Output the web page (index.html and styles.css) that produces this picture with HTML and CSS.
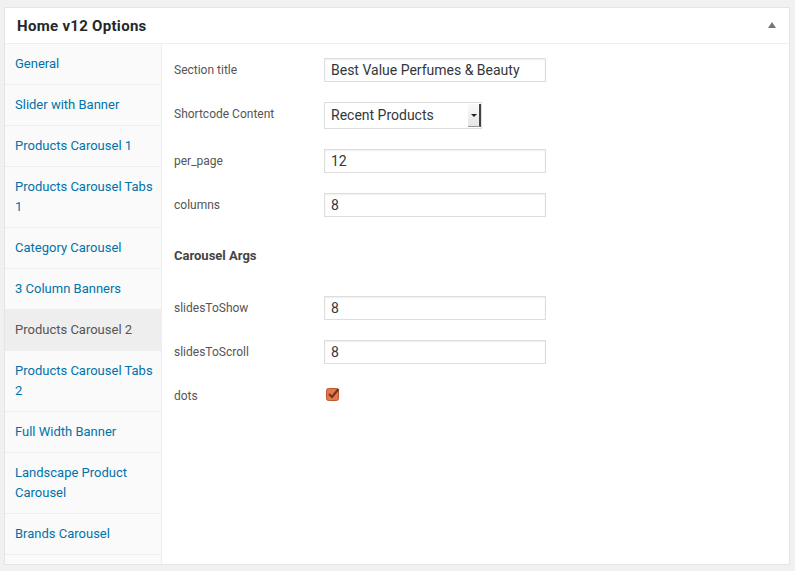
FILE: index.html
```html
<!DOCTYPE html>
<html>
<head>
<meta charset="utf-8">
<link rel="stylesheet" href="styles.css">
</head>
<body>
<div class="postbox">
  <div class="hndle">
    <h2 class="title">Home v12 Options</h2>
    <span class="toggle"></span>
  </div>
  <div class="inside">
    <ul class="tabs">
      <li><a>General</a></li>
      <li><a>Slider with Banner</a></li>
      <li><a>Products Carousel 1</a></li>
      <li><a>Products Carousel Tabs 1</a></li>
      <li><a>Category Carousel</a></li>
      <li><a>3 Column Banners</a></li>
      <li class="active"><a>Products Carousel 2</a></li>
      <li><a>Products Carousel Tabs 2</a></li>
      <li><a>Full Width Banner</a></li>
      <li><a>Landscape Product Carousel</a></li>
      <li><a>Brands Carousel</a></li>
    </ul>
    <div class="panel">
      <div class="row">
        <label class="label">Section title</label>
        <div class="input">Best Value Perfumes &amp; Beauty</div>
      </div>
      <div class="row">
        <label class="label">Shortcode Content</label>
        <div class="select"><span class="sel-value">Recent Products</span><span class="sel-btn"><span class="sel-arrow"></span></span></div>
      </div>
      <div class="row">
        <label class="label">per_page</label>
        <div class="input">12</div>
      </div>
      <div class="row">
        <label class="label">columns</label>
        <div class="input">8</div>
      </div>
      <h3 class="group">Carousel Args</h3>
      <div class="row">
        <label class="label">slidesToShow</label>
        <div class="input">8</div>
      </div>
      <div class="row">
        <label class="label">slidesToScroll</label>
        <div class="input">8</div>
      </div>
      <div class="row">
        <label class="label">dots</label>
        <span class="check"><svg width="14" height="14" viewBox="0 0 14 14"><rect x="0.5" y="1.5" width="12" height="12" rx="2" fill="#e4774c" stroke="#c2552c"/><path d="M3 7 L6 10 L12.5 2" fill="none" stroke="#6b3424" stroke-width="2"/></svg></span>
      </div>
    </div>
  </div>
</div>
</body>
</html>
```

FILE: styles.css
```css
* { box-sizing: border-box; }
html, body { margin: 0; padding: 0; }
body {
  background: #f1f1f1;
  font-family: Roboto, "Noto Sans", Arial, sans-serif;
  color: #444;
}
.postbox {
  margin: 7px 0 0 4px;
  width: 786px;
  height: 558px;
  background: #fff;
  border: 1px solid #e5e5e5;
  box-shadow: 0 1px 1px rgba(0,0,0,.04);
  display: flex;
  flex-direction: column;
}
.hndle {
  height: 36px;
  border-bottom: 1px solid #eee;
  display: flex;
  align-items: center;
  justify-content: space-between;
  padding: 0 12px 0 12px;
}
.title {
  margin: 0;
  font-size: 15px;
  font-weight: 700;
  color: #23282d;
  letter-spacing: 0.3px;
}
.toggle {
  width: 0; height: 0;
  border-left: 4px solid transparent;
  border-right: 4px solid transparent;
  border-bottom: 6px solid #72777c;
  margin-right: 1px;
  margin-top: -2px;
}
.inside {
  flex: 1;
  display: flex;
}
.tabs {
  list-style: none;
  margin: 0;
  padding: 0;
  width: 157px;
  background: #fafafa;
  border-right: 1px solid #eee;
}
.tabs li {
  border-bottom: 1px solid #eee;
  padding: 10px 3px 10px 10px;
  font-size: 13px;
  line-height: 20px;
}
.tabs li a { color: #0073aa; }
.tabs li.active { background: #eee; }
.tabs li.active a { color: #555; }
.panel {
  flex: 1;
  padding: 14px 12px 0 12px;
}
.row {
  display: flex;
  align-items: flex-start;
  margin-bottom: 20px;
}
.label {
  width: 150px;
  font-size: 12px;
  line-height: 16px;
  padding-top: 4px;
  color: #555;
}
.input {
  width: 222px;
  height: 24px;
  border: 1px solid #ddd;
  box-shadow: inset 0 1px 2px rgba(0,0,0,.07);
  font-size: 14px;
  line-height: 22px;
  padding: 0 6px;
  color: #32373c;
}
.select {
  width: 158px;
  height: 27px;
  border: 1px solid #ddd;
  display: flex;
  align-items: stretch;
  font-size: 14px;
  color: #32373c;
}
.sel-value {
  flex: 1;
  line-height: 25px;
  padding-left: 6px;
}
.sel-btn {
  width: 13px;
  margin: 1px 0 1px 0;
  background: linear-gradient(#fafafa, #e6e6e6);
  border-right: 2px solid #444;
  border-bottom: 1px solid #999;
  display: flex;
  align-items: center;
  justify-content: center;
}
.sel-arrow {
  width: 0; height: 0;
  border-left: 3px solid transparent;
  border-right: 3px solid transparent;
  border-top: 3px solid #222;
}
.group {
  margin: 29px 0 30px 0;
  font-size: 13px;
  line-height: 20px;
  font-weight: 700;
  color: #444;
}
.check {
  display: block;
  margin-top: 3px;
  margin-left: 2px;
  height: 14px;
}
.check svg { display: block; }
```
